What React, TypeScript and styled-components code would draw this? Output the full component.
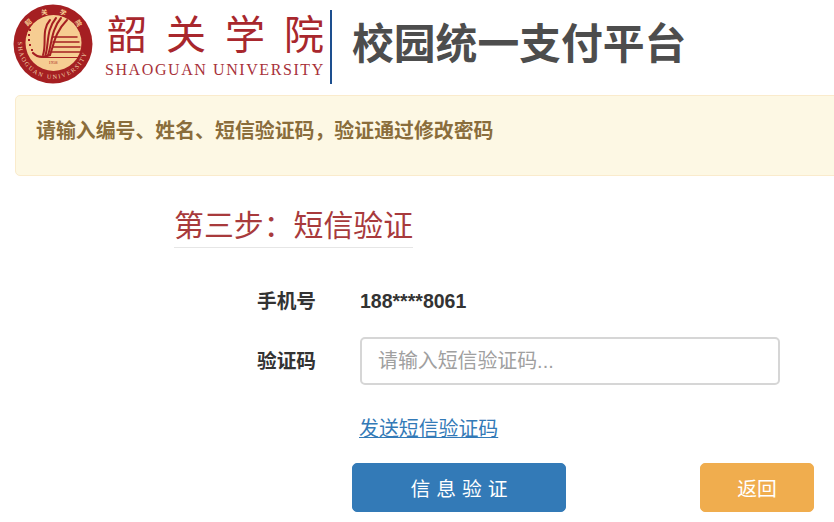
import React from "react";
import styled, { createGlobalStyle } from "styled-components";

const Global = createGlobalStyle`
  html, body { margin: 0; padding: 0; background: #fff; }
  body { width: 834px; height: 522px; overflow: hidden; font-family: "Liberation Sans", "Noto Sans CJK SC", sans-serif; }
  * { box-sizing: border-box; }
`;
const cjk = `"Liberation Sans", "Noto Sans CJK SC", sans-serif`;

const Page = styled.div`
  width: 834px; height: 522px; overflow: hidden; display: flex; flex-direction: column;
`;
const Header = styled.header`
  height: 95px; padding: 4px 0 0 13px; display: flex; align-items: flex-start;
`;
const Emblem = styled.svg`
  width: 80px; height: 80px; flex: none;
`;
const Wordmark = styled.div`
  width: 227px; margin: 4px 0 0 12px; display: flex; flex-direction: column;
`;
const CnName = styled.div`
  font-family: "Noto Sans CJK SC", sans-serif; font-size: 40px; line-height: 48px; height: 48px;
  letter-spacing: 19px; color: #a8272d; font-weight: 400; white-space: nowrap; padding-left: 2px;
`;
const EnName = styled.div`
  font-family: "Liberation Serif", serif; font-size: 16px; line-height: 18px; margin-top: 5px;
  letter-spacing: 1.58px; color: #a8323a; white-space: nowrap;
`;
const Divider = styled.div`
  width: 2px; height: 74px; margin: 6px 0 0 -2px; background: #1d4f8f; flex: none;
`;
const SystemTitle = styled.h1`
  margin: 11px 0 0 20px; font-size: 41.8px; line-height: 60px; font-weight: 700; color: #4d4d4d;
  font-family: ${cjk}; white-space: nowrap;
`;
const Alert = styled.div`
  margin-left: 15px; width: 830px; height: 81px; flex: none; background: #fdf8e4; border: 1px solid #faebcc;
  border-radius: 5px; padding: 0 0 12px 20px; display: flex; align-items: center;
  color: #8a6d3b; font-size: 19.9px; font-weight: 700; white-space: nowrap;
`;
const StepTitle = styled.h2`
  margin: 27px 0 0 174px; width: 239px; height: 45px; border-bottom: 1px solid #e6e6e6;
  font-size: 29.9px; line-height: 46px; font-weight: 400; color: #a83a3c; white-space: nowrap;
`;
const Form = styled.div`
  display: grid; grid-template-columns: 59px 420px; column-gap: 44px; margin: 0 0 0 257px;
`;
const Label = styled.div<{ $top: number; $height: number }>`
  margin-top: ${(p) => p.$top}px; height: ${(p) => p.$height}px; display: flex; align-items: center;
  padding-bottom: 4px;
  font-size: 19.7px; font-weight: 700; color: #333; white-space: nowrap;
`;
const Value = styled.div<{ $top: number; $height: number }>`
  margin-top: ${(p) => p.$top}px; height: ${(p) => p.$height}px; display: flex; align-items: center;
  font-size: 19.5px; font-weight: 700; color: #333; white-space: nowrap;
`;
const InputCell = styled.div`
  margin-top: 21px;
`;
const Input = styled.input`
  display: block; width: 420px; height: 48px; border: 2px solid #d6d6d6; border-radius: 5px; padding: 0 16px; outline: none;
  font-size: 19.9px; font-family: ${cjk}; color: #333; background: #fff;
  &::placeholder { color: #a0a0a0; opacity: 1; }
`;
const SendLink = styled.a`
  grid-column: 2; margin: 31px 0 0 -1px; height: 27px; line-height: 27px; font-size: 19.9px; color: #337ab7;
  text-decoration: underline; white-space: nowrap; width: fit-content;
`;
const Actions = styled.div`
  display: flex; margin: 20px 0 0 352px;
`;
const Button = styled.button<{ $bg: string; $w: number; $gap?: number; $ls?: number }>`
  width: ${(p) => p.$w}px; height: 49px; margin-left: ${(p) => p.$gap ?? 0}px; border: 1px solid ${(p) => p.$bg};
  border-radius: 5px; background: ${(p) => p.$bg}; color: #fff; font-size: 19.8px; font-family: ${cjk};
  letter-spacing: ${(p) => p.$ls ?? 0}px; padding: 0 0 0 ${(p) => p.$ls ?? 0}px; cursor: pointer;
`;

const Seal = () => (
  <Emblem viewBox="0 0 80 80" role="img" aria-label="韶关学院校徽">
    <defs>
      <path id="sealBottom" d="M 5.5 34 A 35 35 0 1 0 74.5 34" />
      <path id="sealTop" d="M 10 40 A 30 30 0 0 1 70 40" />
    </defs>
    <circle cx="40" cy="40" r="39.5" fill="#a51f22" />
    <circle cx="40.5" cy="39" r="28" fill="#f6cd92" />
    <text fontSize="6.2" fill="#f3d9b0" fontFamily="Liberation Serif, serif" letterSpacing="1.6">
      <textPath href="#sealBottom" startOffset="3%">SHAOGUAN UNIVERSITY</textPath>
    </text>
    <text fontSize="6.5" fontWeight="700" fill="#f6cd92" fontFamily="Noto Sans CJK SC, sans-serif" letterSpacing="10.8">
      <textPath href="#sealTop" startOffset="19%">韶关学院</textPath>
    </text>
    <g fill="none" stroke="#a51f22" strokeLinecap="round">
      <path d="M 30 51 C 34 40 28 26 37 16" strokeWidth="2" />
      <path d="M 32.5 51 C 36 40 33 26 43 14" strokeWidth="2" />
      <path d="M 35 51 C 39 40 38 26 48 14" strokeWidth="2" />
      <path d="M 37 51 C 41 40 42 28 54 16" strokeWidth="2" />
      <path d="M 20 49 C 24 53 30 54 37 51" strokeWidth="2.2" />
      <path d="M 40 33 H 64 M 40 38 H 66 M 40 43 H 67 M 39 48 H 67" strokeWidth="1.5" />
      <path d="M 30 53.5 H 66" strokeWidth="1" />
    </g>
    <g fill="#a51f22">
      <rect x="16" y="25" width="2" height="2" /><rect x="15" y="30" width="2" height="2" />
      <rect x="15" y="35" width="2" height="2" /><rect x="16" y="40" width="2" height="2" />
      <rect x="18" y="45" width="2" height="2" />
    </g>
    <text x="40" y="60" textAnchor="middle" fontSize="4.5" fill="#a51f22" fontFamily="Liberation Serif, serif">1958</text>
  </Emblem>
);

export default function App() {
  return (
    <Page>
      <Global />
      <Header>
        <Seal />
        <Wordmark>
          <CnName>韶关学院</CnName>
          <EnName>SHAOGUAN UNIVERSITY</EnName>
        </Wordmark>
        <Divider />
        <SystemTitle>校园统一支付平台</SystemTitle>
      </Header>
      <Alert>{"请输入编号、姓名、短信验证码\uFF0C验证通过修改密码"}</Alert>
      <StepTitle>{"第三步\uFF1A短信验证"}</StepTitle>
      <Form>
        <Label $top={38} $height={30}>手机号</Label>
        <Value $top={38} $height={30}>188****8061</Value>
        <Label $top={21} $height={48}>验证码</Label>
        <InputCell><Input placeholder="请输入短信验证码..." /></InputCell>
        <SendLink href="#">发送短信验证码</SendLink>
      </Form>
      <Actions>
        <Button $bg="#337ab7" $w={214} $ls={6}>信息验证</Button>
        <Button $bg="#f0ad4e" $w={114} $gap={134}>返回</Button>
      </Actions>
    </Page>
  );
}
